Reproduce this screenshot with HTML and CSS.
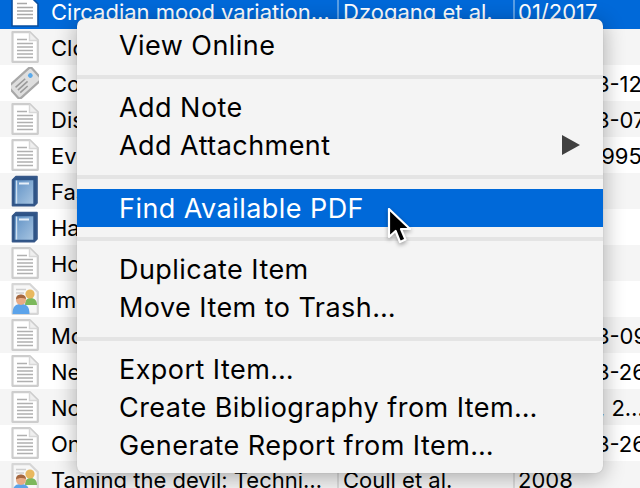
FILE: index.html
```html
<!DOCTYPE html>
<html lang="en">
<head>
<meta charset="utf-8">
<title>Item context menu</title>
<link rel="stylesheet" href="styles.css">
</head>
<body>
<svg class="defs" width="0" height="0" aria-hidden="true">
  <defs>
    <linearGradient id="bookFill" x1="0" y1="0" x2="1" y2="1">
      <stop offset="0" stop-color="#5d8fc4"/>
      <stop offset="1" stop-color="#a9c6e2"/>
    </linearGradient>
    <symbol id="doc" viewBox="0 0 28 32">
      <path d="M1.5 1.2H19L26.8 9V30.8H1.5Z" fill="#fff" stroke="#cdcdcd" stroke-width="2.2" stroke-linejoin="round"/>
      <path d="M18.5 1.5V9.5H26.5" fill="#efefef" stroke="#d8d8d8" stroke-width="1.4"/>
      <path d="M6 8.5H16M6 12.5H22M6 16H22M6 19.5H22M6 23H22M6 26.5H22" stroke="#b0b0b0" stroke-width="1.5" fill="none"/>
    </symbol>
    <symbol id="selDoc" viewBox="0 0 28 32">
      <path d="M1 1H19L27 9V31H1Z" fill="#fff" stroke="#0a4f9e" stroke-width="1.6"/>
      <path d="M6 8.5H16M6 12.5H22M6 16H22M6 19.5H22M6 23H22" stroke="#a8a8a8" stroke-width="1.5" fill="none"/>
    </symbol>
    <symbol id="book" viewBox="0 0 28 32">
      <path d="M1.5 5L5 1.5H26V28L23 30.8H1.5Z" fill="#2f5487" stroke="#38598a" stroke-width="1.6" stroke-linejoin="round"/>
      <path d="M3 4.5H23V29.5H3Z" fill="url(#bookFill)" stroke="#2f5487" stroke-width="1.4"/>
      <path d="M5.6 5.5V28.5" stroke="#cfe0f0" stroke-width="1.2" fill="none"/>
      <path d="M8 8.5H18" stroke="#e6eff8" stroke-width="2" fill="none"/>
    </symbol>
    <symbol id="tag" viewBox="0 0 28 32">
      <g transform="rotate(-42 14 16)">
        <rect x="-1" y="7.5" width="30" height="17" rx="2.5" fill="#dedede" stroke="#a8a8a8" stroke-width="2.2"/>
        <path d="M4 13H17M4 16.5H17M4 20H14" stroke="#9a9a9a" stroke-width="1.6" fill="none"/>
        <circle cx="23" cy="14" r="2.4" fill="#5aa9ea"/>
      </g>
    </symbol>
    <symbol id="people" viewBox="0 0 28 32">
      <path d="M1.5 1.2H19L26.8 9V30.8H1.5Z" fill="#f7f7f7" stroke="#d6d6d6" stroke-width="2.2" stroke-linejoin="round"/>
      <path d="M5 6.5H15M5 10H13" stroke="#cfcfcf" stroke-width="1.4" fill="none"/>
      <path d="M14 22C14 16 17 15 19.5 15S26 16 26 22Z" fill="#7cb85c"/>
      <circle cx="19" cy="11" r="4.6" fill="#e8b85f"/>
      <path d="M1.5 31C1.5 23 5 21 10 21S18.5 23 18.5 31Z" fill="#5ba3ea"/>
      <circle cx="10" cy="17" r="5" fill="#e8ab86"/>
      <path d="M5 16.5C5 12 8 11.5 10 11.5S15 12.5 15 16C12 14.5 8 14.5 5 16.5Z" fill="#a5673f"/>
    </symbol>
  </defs>
</svg>

<div class="screen">
  <div class="table">
    <div class="row selected">
      <div class="cell title"><svg class="icon"><use href="#selDoc"/></svg><span class="label">Circadian mood variation…</span></div>
      <div class="cell">Dzogang et al.</div>
      <div class="cell date">01/2017</div>
    </div>
    <div class="row odd"><div class="cell title"><svg class="icon"><use href="#doc"/></svg><span class="label">Clock genes</span></div><div class="cell"></div><div class="cell date"></div></div>
    <div class="row"><div class="cell title"><svg class="icon"><use href="#tag"/></svg><span class="label">Computing</span></div><div class="cell">Smith</div><div class="cell date">Fall 2013-12</div></div>
    <div class="row odd"><div class="cell title"><svg class="icon"><use href="#doc"/></svg><span class="label">Discovery</span></div><div class="cell">Jones</div><div class="cell date">Fall 2013-07</div></div>
    <div class="row"><div class="cell title"><svg class="icon"><use href="#doc"/></svg><span class="label">Evolution</span></div><div class="cell">Brown</div><div class="cell date">Spring 1995</div></div>
    <div class="row odd"><div class="cell title"><svg class="icon"><use href="#book"/></svg><span class="label">Fast and slow</span></div><div class="cell"></div><div class="cell date"></div></div>
    <div class="row"><div class="cell title"><svg class="icon"><use href="#book"/></svg><span class="label">Handbook</span></div><div class="cell"></div><div class="cell date"></div></div>
    <div class="row odd"><div class="cell title"><svg class="icon"><use href="#doc"/></svg><span class="label">How we feel</span></div><div class="cell"></div><div class="cell date"></div></div>
    <div class="row"><div class="cell title"><svg class="icon"><use href="#people"/></svg><span class="label">Implicit</span></div><div class="cell"></div><div class="cell date"></div></div>
    <div class="row odd"><div class="cell title"><svg class="icon"><use href="#doc"/></svg><span class="label">Modelling</span></div><div class="cell">Lee</div><div class="cell date">Fall 2013-09</div></div>
    <div class="row"><div class="cell title"><svg class="icon"><use href="#doc"/></svg><span class="label">Networks</span></div><div class="cell">Chen</div><div class="cell date">Fall 2013-26</div></div>
    <div class="row odd"><div class="cell title"><svg class="icon"><use href="#doc"/></svg><span class="label">Notes on</span></div><div class="cell">Wang</div><div class="cell date">March 1, 2…</div></div>
    <div class="row"><div class="cell title"><svg class="icon"><use href="#doc"/></svg><span class="label">On the</span></div><div class="cell">Park</div><div class="cell date">Fall 2013-26</div></div>
    <div class="row odd"><div class="cell title"><svg class="icon"><use href="#people"/></svg><span class="label">Taming the devil: Techni…</span></div><div class="cell">Coull et al.</div><div class="cell date">2008</div></div>
  </div>

  <div class="menu">
    <div class="group">
      <div class="item">View Online</div>
    </div>
    <div class="sep"></div>
    <div class="group">
      <div class="item">Add Note</div>
      <div class="item">Add Attachment<span class="arrow"></span></div>
    </div>
    <div class="sep"></div>
    <div class="group">
      <div class="item active">Find Available PDF</div>
    </div>
    <div class="sep"></div>
    <div class="group">
      <div class="item">Duplicate Item</div>
      <div class="item">Move Item to Trash…</div>
    </div>
    <div class="sep"></div>
    <div class="group">
      <div class="item">Export Item…</div>
      <div class="item">Create Bibliography from Item…</div>
      <div class="item">Generate Report from Item…</div>
    </div>
  </div>

  <svg class="cursor" width="26" height="38" viewBox="0 0 26 38">
    <path d="M2 1V29L8.6 23L13 34L18.5 31.6L14 21H23Z" fill="#000" stroke="#fff" stroke-width="2.2" stroke-linejoin="round"/>
  </svg>
</div>
</body>
</html>
```

FILE: styles.css
```css
* { box-sizing: border-box; }
html, body { margin: 0; padding: 0; }
body { background: #fff; font-family: Inter, "Liberation Sans", sans-serif; color: #000; }
.defs { position: absolute; }
.screen { position: relative; width: 640px; height: 488px; overflow: hidden; background: #fff; }

.table { margin-top: -7px; }
.row { display: grid; grid-template-columns: 337px 176px 127px; grid-template-rows: 36px; height: 36px; font-size: 22px; line-height: 38px; background: #fff; }
.row.odd { background: #f5f5f5; }
.row.selected { background: #0069d9; color: #fff; }
.cell { white-space: nowrap; overflow: hidden; padding-left: 6px; }
.cell + .cell { border-left: 2px solid #dcdcdc; padding-left: 4px; }
.cell.date { padding-left: 3px; }
.row.selected .cell + .cell { border-left-color: #5a9fe6; }
.cell.title { display: flex; align-items: center; gap: 12px; padding-left: 11px; }
.icon { width: 28px; height: 32px; flex: none; }
.label { align-self: flex-start; overflow: hidden; }

.menu { position: absolute; left: 77px; top: 19px; width: 526px; height: 454px; padding-top: 7px; display: flex; flex-direction: column; background: #f4f4f4; border-radius: 7px; box-shadow: 0 4px 22px rgba(0,0,0,.32), 0 0 1px rgba(0,0,0,.25); font-size: 27px; letter-spacing: .45px; }
.item { display: flex; justify-content: space-between; align-items: center; height: 38px; padding: 0 23px 0 42px; white-space: nowrap; }
.item.active { background: #0069d9; color: #fff; }
.group:has(.active) { margin: 1px 0 -1px; }
.sep { flex: none; height: 4px; margin: 11px 0 9px; background: #e4e4e4; }
.arrow { width: 18px; height: 20px; background: #404040; clip-path: polygon(0 0, 100% 50%, 0 100%); }
.cursor { position: absolute; left: 387px; top: 208px; filter: drop-shadow(0 2px 2px rgba(0,0,0,.35)); }
```
